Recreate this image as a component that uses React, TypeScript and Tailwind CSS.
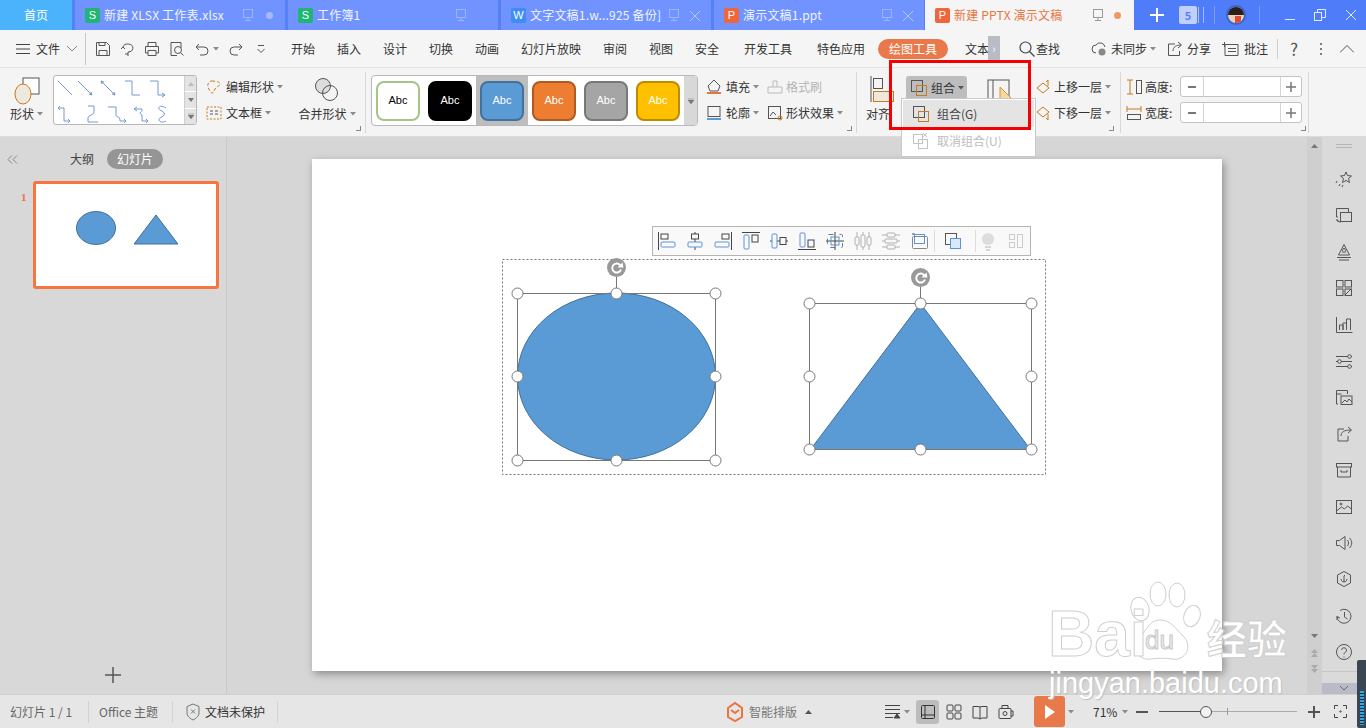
import React from "react";

const S = ({ w, h, children, className = "" }: { w: number; h: number; children: React.ReactNode; className?: string }) => (
  <svg width={w} height={h} viewBox={`0 0 ${w} ${h}`} fill="none" stroke="#555" strokeWidth="1" className={"shrink-0 " + className}>{children}</svg>
);
const Caret = ({ c = "#8a8a8a" }: { c?: string }) => (
  <svg width="6" height="4" viewBox="0 0 6 4" className="shrink-0 ml-[3px]"><path d="M0 0h6L3 3.5z" fill={c} /></svg>
);
const Monitor = ({ c }: { c: string }) => (
  <S w={14} h={14}><g stroke={c}><rect x="2.5" y="1.5" width="9" height="8" /><path d="M7 9.500v3M4 12.500h6" /></g></S>
);

function Tab({ letter, color, title, end, active }: { letter: string; color: string; title: string; end: "dot" | "x" | "none" | "odot"; active?: boolean }) {
  return (
    <div className={"w-[210px] h-full flex items-center relative shrink-0 pl-[10px] " + (active ? "bg-[#f5f5f5] text-[#e8743f]" : "bg-[#7093ff] text-[#f0f3ff]")}>
      <div className="w-[15px] h-[15px] rounded-[2px] flex items-center justify-center text-white text-[11px] font-['Liberation_Sans',sans-serif]" style={{ background: color }}>{letter}</div>
      <span className="ml-[4px] text-[12px] whitespace-nowrap tracking-[0.2px]">{title}</span>
      <div className="absolute left-[166px] top-[8px]"><Monitor c={active ? "#9a9a9a" : "#9db4ff"} /></div>
      {end === "dot" && <div className="absolute left-[191px] top-[12px] w-[7px] h-[7px] rounded-full bg-[#a5baff]" />}
      {end === "odot" && <div className="absolute left-[189px] top-[12px] w-[7px] h-[7px] rounded-full bg-[#eb9a62]" />}
      {end === "x" && <svg width="12" height="12" className="absolute left-[188px] top-[10px]" stroke="#b4c6ff"><path d="M1 1l10 10M11 1L1 11" /></svg>}
    </div>
  );
}

function TabBar() {
  return (
    <div className="h-[30px] flex bg-[#5580f7] gap-[3px]">
      <div className="w-[72px] bg-[#4ab3fb] text-white text-[12px] flex items-center justify-center shrink-0">首页</div>
      <Tab letter="S" color="#20b573" title="新建 XLSX 工作表.xlsx" end="dot" />
      <Tab letter="S" color="#20b573" title="工作簿1" end="none" />
      <Tab letter="W" color="#3f8cf5" title="文字文稿1.w...925 备份]" end="x" />
      <Tab letter="P" color="#f0663c" title="演示文稿1.ppt" end="x" />
      <div className="w-[209px] shrink-0 -ml-[2px]"><Tab letter="P" color="#f0663c" title="新建 PPTX 演示文稿" end="odot" active /></div>
      <div className="flex-1 flex items-center bg-[#4f7cf8] -ml-[3px] relative">
        <svg width="14" height="14" className="ml-[16px]" stroke="#fff" strokeWidth="2"><path d="M7 0v14M0 7h14" /></svg>
        <div className="ml-[15px] w-[18px] h-[18px] bg-[#c0d0fb] text-[#5580f7] text-[11px] font-bold flex items-center justify-center rounded-[2px]">5</div>
        <div className="w-[6px] h-[16px] ml-[1px] border-x border-[#a9bffa]" />
        <div className="w-px h-[18px] bg-[#7b9dfa] ml-[10px]" />
        <div className="ml-[11px] w-[20px] h-[20px] rounded-full bg-[#e9d3b8] border-2 border-[#3f63c9] overflow-hidden relative">
          <div className="h-[8px] bg-[#2a1f1c]" />
          <div className="absolute left-[7px] top-[9px] w-[6px] h-[7px] bg-[#e04a2e]" />
        </div>
        <div className="w-px h-[18px] bg-[#7b9dfa] ml-[13px]" />
        <div className="ml-[25px] w-[10px] h-px bg-[#dfe7ff] mt-[8px]" />
        <svg width="12" height="12" className="ml-[19px]" fill="none" stroke="#e6ecff"><rect x="0.500" y="3.500" width="7" height="8" /><path d="M3.500 3V.5h8v8H8" /></svg>
        <svg width="12" height="12" className="ml-[19px]" stroke="#e6ecff"><path d="M1 1l10 10M11 1L1 11" /></svg>
      </div>
    </div>
  );
}

const QIcons = () => (
  <div className="flex items-center text-[#555]">
    <S w={16} h={16} className="ml-[9px]"><path d="M1.500 1.500h10l3 3v10h-13zM4 1.500v3h6v-3M4 14.500v-5h8v5" /></S>
    <S w={16} h={16} className="ml-[9px]"><path d="M3 6a5 4 0 1 1 5 5v4M1 8l2-2 2 2M5 13h3" /></S>
    <S w={16} h={16} className="ml-[8px]"><path d="M4 5V1.500h8V5M1.500 12V5.500h13V12H12M4 12H1.500M4 9.500h8v5H4z" /></S>
    <S w={16} h={16} className="ml-[9px]"><path d="M12 7V1.500H2v13h6" /><circle cx="9" cy="9" r="3.500" /><path d="M11.500 11.500l3 3" /></S>
    <S w={16} h={16} className="ml-[9px]"><path d="M2 6h8a4 4 0 0 1 0 8H6M2 6l3-3M2 6l3 3" /></S>
    <Caret />
    <S w={16} h={16} className="ml-[9px]"><path d="M14 6H6a4 4 0 0 0 0 8h4M14 6l-3-3M14 6l-3 3" /></S>
    <S w={10} h={10} className="ml-[12px]"><path d="M2 1.500h6M1.500 5l3.500 3.500L8.500 5" /></S>
  </div>
);

const menu: [string, number][] = [["开始", 46], ["插入", 46], ["设计", 46], ["切换", 46], ["动画", 46], ["幻灯片放映", 82], ["审阅", 46], ["视图", 46], ["安全", 46], ["开发工具", 76], ["特色应用", 70]];

function MenuBar() {
  return (
    <div className="h-[38px] bg-[#f5f5f5] border-b border-[#e3e3e3] flex items-center text-[12px] text-[#333]">
      <svg width="14" height="12" className="ml-[16px]" stroke="#444"><path d="M0 1.500h14M0 6h14M0 10.500h14" /></svg>
      <span className="ml-[6px]">文件</span>
      <svg width="10" height="6" className="ml-[7px]" fill="none" stroke="#888"><path d="M0 0l5 5 5-5" /></svg>
      <div className="w-px h-[32px] bg-[#c8c8c8] ml-[8px]" />
      <div className="w-[194px] shrink-0"><QIcons /></div>
      {menu.map(([t, w]) => <div key={t} className="text-center shrink-0" style={{ width: w }}>{t}</div>)}
      <div className="ml-[2px] w-[70px] h-[20px] rounded-full bg-[#e9794a] text-white flex items-center justify-center shrink-0">绘图工具</div>
      <span className="ml-[17px] w-[23px] shrink-0 whitespace-nowrap">文本</span>
      <div className="w-[12px] h-[26px] bg-[#b9bcc4] flex items-center justify-center text-[#fff] text-[11px]">›</div>
      <svg width="16" height="16" className="ml-[19px]" fill="none" stroke="#444" strokeWidth="1.200"><circle cx="6.500" cy="6.500" r="5.500" /><path d="M10.500 10.500l5 5" /></svg>
      <span className="ml-[1px]">查找</span>
      <S w={18} h={16} className="ml-[31px]"><path d="M5 12a4 4 0 0 1 0-8 5 5 0 0 1 9 2" /><circle cx="11" cy="11" r="3.500" fill="#888" stroke="none" /></S>
      <span className="ml-[2px]">未同步</span><Caret />
      <S w={16} h={16} className="ml-[11px]"><path d="M8 3H1.500v11.500h11V10M6 10c0-4 3-6 8-6M11 1l3.500 3L11 7" /></S>
      <span className="ml-[4px]">分享</span>
      <S w={18} h={16} className="ml-[11px]"><path d="M3 3.500h13v11H3zM0 3.500h5M2.500 1v5M6 7.500h8M6 10.500h8" /></S>
      <span className="ml-[4px]">批注</span>
      <div className="w-px h-[20px] bg-[#cfcfcf] ml-[9px]" />
      <span className="ml-[12px] text-[17px] text-[#555] w-[12px]">?</span>
      <svg width="4" height="14" className="ml-[17px]" fill="#555"><circle cx="2" cy="2" r="1" /><circle cx="2" cy="7" r="1" /><circle cx="2" cy="12" r="1" /></svg>
      <svg width="14" height="8" className="ml-[17px]" fill="none" stroke="#555"><path d="M0 7.500L7 .5l7 7" /></svg>
    </div>
  );
}

const Corner = () => <div className="absolute right-[4px] bottom-[5px] w-[5px] h-[5px] border-r border-b border-[#888]" />;

function ShapeGallery() {
  return (
    <div className="w-[144px] h-[50px] mt-[7px] bg-white border border-[#b8b8b8] rounded-[3px] flex overflow-hidden shrink-0">
      <svg width="130" height="48" fill="none" stroke="#7697d4" strokeWidth="1" className="shrink-0">
        <path d="M4 5l14 14M24 5l14 14M38 19l-3-1M38 19l-1-3M47 5l14 14M47 5l1 3M47 5l3 1M61 19l-3-1M61 19l-1-3" />
        <path d="M71 5h7v14h8M96 5h8v14h7M111 19l-3-2M111 19l-3 2" />
        <path d="M4 32h6v13h6M16 45l-2-2M16 45l-2 2M4 32l2-2M4 32l2 2M34 30h6v6c0 3-6 3-6 6v4h10M54 31h8v8c0 3 4 0 4 6h6M72 45l-2-2M72 45l-2 2M80 33h8c1 4-5 3 0 6v6h6M80 33l3-2M80 33l3 2M94 45l-2-2M94 45l-2 2M112 32c-6-4-9 0-6 2 6 3 6 5 0 8-3 2 1 6 6 3" />
      </svg>
      <div className="flex-1 flex flex-col bg-[#e3e3e3] border-l border-[#cfcfcf] text-center">
        <div className="flex-1 border-b border-[#fff] flex items-center justify-center"><svg width="6" height="4"><path d="M3 0l3 4H0z" fill="#bbb" /></svg></div>
        <div className="flex-1 border-b border-[#fff] flex items-center justify-center"><svg width="6" height="4"><path d="M0 0h6L3 4z" fill="#777" /></svg></div>
        <div className="flex-1 flex items-center justify-center"><svg width="6" height="6"><path d="M0 2h6L3 6zM0 0h6" fill="#777" stroke="#777" strokeWidth=".5" /></svg></div>
      </div>
    </div>
  );
}

const styles = [
  { bg: "#fff", bd: "#a5c586", t: "#000" },
  { bg: "#000", bd: "#000", t: "#fff" },
  { bg: "#5b9bd5", bd: "#41719c", t: "#fff" },
  { bg: "#ed7d31", bd: "#ae5a21", t: "#fff" },
  { bg: "#a5a5a5", bd: "#787878", t: "#fff" },
  { bg: "#ffc000", bd: "#bc8c00", t: "#fff" },
];

function StyleGallery() {
  return (
    <div className="w-[327px] h-[51px] mt-[7px] ml-[5px] border border-[#b8b8b8] rounded-[4px] bg-white flex items-center overflow-hidden shrink-0">
      <div className="flex-1 flex items-center h-full">
        {styles.map((s, i) => (
          <div key={i} className={"w-[52px] h-full flex items-center justify-center " + (i === 2 ? "bg-[#bdbdbd]" : "")}>
            <div className="w-[44px] h-[40px] rounded-[8px] border-2 flex items-center justify-center text-[11px] font-['Liberation_Sans',sans-serif]" style={{ background: s.bg, borderColor: s.bd, color: s.t }}>Abc</div>
          </div>
        ))}
      </div>
      <div className="w-[13px] h-full bg-[#d8d8d8] flex items-center justify-center shrink-0"><svg width="6" height="6"><path d="M0 2h6L3 6zM0 0h6" fill="#777" stroke="#777" strokeWidth=".5" /></svg></div>
    </div>
  );
}

const Spin = () => (
  <div className="w-[122px] h-[21px] bg-white border border-[#c4c4c4] rounded-[3px] flex items-center text-[#777] shrink-0">
    <div className="w-[23px] h-full border-r border-[#d5d5d5] flex items-center justify-center"><div className="w-[8px] h-[2px] bg-[#777]" /></div>
    <div className="flex-1" />
    <div className="w-[21px] h-full border-l border-[#d5d5d5] flex items-center justify-center"><svg width="10" height="10" stroke="#777" strokeWidth="1.500"><path d="M5 0v10M0 5h10" /></svg></div>
  </div>
);

function Ribbon() {
  return (
    <div className="h-[69px] bg-[#f4f4f4] border-b border-[#dcdcdc] flex text-[12px] text-[#333] relative">
      <div className="w-[53px] shrink-0 flex flex-col items-center">
        <svg width="30" height="30" className="mt-[8px]" fill="none"><rect x="11" y="2" width="16" height="16" stroke="#555" fill="#fff" /><ellipse cx="11" cy="18" rx="8" ry="10" fill="#efe8dc" stroke="#c87a1e" /></svg>
        <div className="flex items-center -mt-[1px]">形状<Caret /></div>
      </div>
      <ShapeGallery />
      <div className="w-[96px] shrink-0 pl-[9px] flex flex-col">
        <div className="flex items-center h-[20px] mt-[9px]"><S w={16} h={16}><path d="M6 2c4 0 8 1 8 3s-3 2-5 5-1 4-3 4-5-7-4-9 2-3 4-3z" stroke="#c87a1e" strokeDasharray="3 2" /></S><span className="ml-[4px]">编辑形状</span><Caret /></div>
        <div className="flex items-center h-[20px] mt-[6px]"><S w={16} h={16}><rect x="1" y="2" width="14" height="12" stroke="#c87a1e" strokeDasharray="2 1.500" /><path d="M4 6h3M4 9h3M9 6h3M9 9h3" /></S><span className="ml-[4px]">文本框</span><Caret /></div>
      </div>
      <div className="w-[68px] shrink-0 flex flex-col items-center">
        <svg width="26" height="26" className="mt-[9px]" fill="none" stroke="#555"><circle cx="9" cy="9" r="7.500" fill="#ddd" /><circle cx="16" cy="16" r="7.500" /></svg>
        <div className="flex items-center mt-[2px]">合并形状<Caret /></div>
      </div>
      <div className="relative w-[8px] shrink-0 -ml-[4px]"><Corner /></div>
      <div className="w-px h-[61px] mt-[4px] bg-[#d8d8d8] shrink-0" />
      <StyleGallery />
      <div className="w-[158px] shrink-0 pl-[8px] flex flex-col relative">
        <div className="flex items-center h-[20px] mt-[9px]">
          <S w={16} h={16}><path d="M8 1l6 6-2 5H4L2 7z" /><path d="M1 14h14" stroke="#e8743f" strokeWidth="2" /></S><span className="ml-[4px]">填充</span><Caret />
          <S w={16} h={16} className="ml-[8px]"><g stroke="#bbb"><path d="M1 14V8h14v6zM6 8V2h4v6" /></g></S><span className="ml-[3px] text-[#b5b5b5]">格式刷</span>
        </div>
        <div className="flex items-center h-[20px] mt-[6px]">
          <S w={16} h={16}><rect x="2" y="1.500" width="12" height="10" /><path d="M1 14h14" stroke="#5b9bd5" strokeWidth="2" /></S><span className="ml-[4px]">轮廓</span><Caret />
          <S w={16} h={16} className="ml-[8px]"><rect x="1.500" y="1.500" width="12" height="12" /><path d="M3 11l3-4 3 3" /><circle cx="13" cy="13" r="2" stroke="#c87a1e" /></S><span className="ml-[3px]">形状效果</span><Caret />
        </div>
        <Corner />
      </div>
      <div className="w-px h-[61px] mt-[4px] bg-[#d8d8d8] shrink-0" />
      <div className="w-[49px] shrink-0 flex flex-col pl-[9px]">
        <svg width="24" height="26" className="mt-[8px] ml-[4px]" fill="none" stroke="#555"><path d="M1 0v26" /><rect x="3.500" y="2.500" width="9" height="10" /><rect x="3.500" y="15.500" width="20" height="10" stroke="#c87a1e" fill="#efe8dc" /></svg>
        <span className="mt-[3px] whitespace-nowrap">对齐</span>
      </div>
      <div className="w-[61px] h-[24px] mt-[8px] bg-[#bdbdbd] rounded-[3px] flex items-center pl-[4px] shrink-0">
        <S w={18} h={18}><rect x="1.500" y="1.500" width="11" height="11" /><rect x="6.500" y="6.500" width="10" height="10" stroke="#c87a1e" /></S>
        <span className="ml-[3px]">组合</span><Caret c="#555" />
      </div>
      <div className="w-[68px] shrink-0 flex justify-center pr-[2px]">
        <svg width="26" height="24" className="mt-[10px]" fill="none" stroke="#555"><rect x="1" y="2" width="21" height="19" /><path d="M6 2v19" /><path d="M13 9l11 11-4 1 2 3H13z" fill="#f3d9a5" stroke="#d8932a" /></svg>
      </div>
      <div className="w-[85px] shrink-0 flex flex-col">
        <div className="flex items-center h-[20px] mt-[9px]"><S w={16} h={16}><path d="M2 9l6-5 6 5-6 5z" stroke="#c87a1e" /><path d="M13 7V1l-2 2" stroke="#c87a1e" /></S><span className="ml-[3px]">上移一层</span><Caret /></div>
        <div className="flex items-center h-[20px] mt-[6px]"><S w={16} h={16}><path d="M2 7l6-5 6 5-6 5z" stroke="#c87a1e" /><path d="M13 9v6l-2-2" stroke="#c87a1e" /></S><span className="ml-[3px]">下移一层</span><Caret /></div>
      </div>
      <div className="w-[2px] shrink-0 relative -ml-[8px] mr-[6px]"><div className="absolute right-0 bottom-[5px] w-[5px] h-[5px] border-r border-b border-[#888]" /></div>
      <div className="w-px h-[61px] mt-[4px] bg-[#d8d8d8] shrink-0" />
      <div className="w-[189px] shrink-0 pl-[5px] relative flex flex-col">
        <div className="flex items-center h-[21px] mt-[8px]">
          <S w={16} h={16}><path d="M1 1h6M1 15h6M4 1v14" stroke="#c87a1e" /><rect x="10.500" y="1.500" width="5" height="13" /></S>
          <span className="ml-[3px] mr-[3px] w-[32px]">高度:</span><Spin />
        </div>
        <div className="flex items-center h-[21px] mt-[5px]">
          <S w={16} h={16}><path d="M1 1v6M15 1v6M1 4h14" stroke="#c87a1e" /><rect x="1.500" y="9.500" width="13" height="5" /></S>
          <span className="ml-[3px] mr-[3px] w-[32px]">宽度:</span><Spin />
        </div>
        <Corner />
      </div>
      <div className="w-px h-[61px] mt-[4px] bg-[#d8d8d8] shrink-0 -ml-[2px]" />
    </div>
  );
}

function Dropdown() {
  return (
    <div className="absolute left-[901px] top-[98px] w-[135px] h-[59px] bg-white border border-[#c9c9c9] text-[12px] z-10 p-[1px]">
      <div className="h-[27px] bg-[#e4e4e4] flex items-center pl-[9px] text-[#444]">
        <S w={18} h={18}><rect x="1.500" y="1.500" width="11" height="11" /><rect x="6.500" y="6.500" width="10" height="10" stroke="#c87a1e" /></S>
        <span className="ml-[7px]">组合(G)</span>
      </div>
      <div className="h-[28px] flex items-center pl-[9px] text-[#bdbdbd]">
        <S w={18} h={18}><g stroke="#c4c4c4"><rect x="1.500" y="2.500" width="9" height="9" /><rect x="6.500" y="7.500" width="9" height="9" /><path d="M11 1l4 4M15 1l-4 4" /></g></S>
        <span className="ml-[7px]">取消组合(U)</span>
      </div>
    </div>
  );
}

const b = "#5b93dd";
const g = "#b0b0b0";
const FT: React.ReactNode[] = [
  <><path d="M1.500 1v18" stroke="#444" /><rect x="4" y="3" width="7" height="5" stroke="#444" /><rect x="4" y="11" width="14" height="5" rx="1" stroke={b} /></>,
  <><path d="M10 1v18" stroke="#444" /><rect x="6.500" y="3" width="7" height="5" fill="#f8f8f8" stroke="#444" /><rect x="3" y="11" width="14" height="5" rx="1" fill="#f8f8f8" stroke={b} /></>,
  <><path d="M18.500 1v18" stroke="#444" /><rect x="9" y="3" width="7" height="5" stroke="#444" /><rect x="2" y="11" width="14" height="5" rx="1" stroke={b} /></>,
  <><path d="M1 1.500h18" stroke="#444" /><rect x="3" y="4" width="5" height="14" rx="1" stroke={b} /><rect x="11" y="4" width="6" height="7" stroke="#444" /></>,
  <><path d="M1 10h18" stroke="#444" /><rect x="3" y="3" width="5" height="14" rx="1" fill="#f8f8f8" stroke={b} /><rect x="11" y="6.500" width="6" height="7" fill="#f8f8f8" stroke="#444" /></>,
  <><path d="M1 18.500h18" stroke="#444" /><rect x="3" y="2" width="5" height="14" rx="1" stroke={b} /><rect x="11" y="9" width="6" height="7" stroke="#444" /></>,
  <><path d="M1 10h18M10 1v18" stroke="#444" /><rect x="2.500" y="3.500" width="15" height="13" rx="1" stroke="#777" strokeDasharray="5 6" /><rect x="6" y="6" width="8" height="8" stroke={b} /></>,
  <><path d="M4 1v18M10 1v18M16 1v18" stroke={g} /><rect x="2" y="6" width="4" height="8" rx="1" fill="#f8f8f8" stroke={g} /><rect x="8" y="4" width="4" height="12" rx="1" fill="#f8f8f8" stroke={g} /><rect x="14" y="6" width="4" height="8" rx="1" fill="#f8f8f8" stroke={g} /></>,
  <><path d="M1 4h18M1 10h18M1 16h18" stroke={g} /><rect x="6" y="2" width="8" height="4" rx="1" fill="#f8f8f8" stroke={g} /><rect x="4" y="8" width="12" height="4" rx="1" fill="#f8f8f8" stroke={g} /><rect x="6" y="14" width="8" height="4" rx="1" fill="#f8f8f8" stroke={g} /></>,
  <><path d="M3 3h3" stroke="#444" /><rect x="3.500" y="5.500" width="15" height="12" rx="1" stroke="#888" /><rect x="5.500" y="3.500" width="10" height="9" stroke={b} /></>,
];

function FloatBar() {
  return (
    <div className="absolute left-[340px] top-[67px] h-[30px] w-[379px] bg-[#f9f9f9] border border-[#b5b5b5] flex items-center pl-[4px] z-[5]">
      {FT.map((n, i) => (
        <svg key={i} width="20" height="20" fill="none" className="shrink-0 mr-[8px]">{n}</svg>
      ))}
      <div className="w-px h-[22px] bg-[#ddd] -ml-[3px] mr-[8px]" />
      <svg width="20" height="20" fill="none" className="shrink-0 mr-[12px]"><rect x="2.500" y="2.500" width="11" height="11" stroke="#555" /><rect x="7.500" y="7.500" width="10" height="10" fill="#dbe8fb" stroke={b} /></svg>
      <div className="w-px h-[22px] bg-[#ddd] mr-[2px]" />
      <svg width="20" height="20" fill="none" className="shrink-0 mr-[8px]"><circle cx="10" cy="8" r="6" fill="#ddd" /><path d="M7 16h6M8 19h4" stroke="#ccc" strokeWidth="1.500" /></svg>
      <svg width="20" height="20" fill="none" stroke="#ccc" className="shrink-0"><rect x="3.500" y="3.500" width="5" height="5" /><rect x="3.500" y="11.500" width="5" height="5" /><rect x="11.500" y="3.500" width="5" height="13" /></svg>
    </div>
  );
}

const Handle = ({ x, y }: { x: number; y: number }) => <circle cx={x} cy={y} r="5.500" fill="#fff" stroke="#777" />;
const Rot = ({ x, y }: { x: number; y: number }) => (
  <g>
    <circle cx={x} cy={y} r="9.500" fill="#999" />
    <path d={`M${x + 4} ${y - 2}a4.500 4.500 0 1 0 0.500 4`} fill="none" stroke="#fff" strokeWidth="2" />
    <path d={`M${x + 1} ${y}h6l-1-5z`} fill="#fff" />
  </g>
);

function Drawing() {
  return (
    <svg width="910" height="512" className="absolute left-0 top-0" fill="none">
      <rect x="190.500" y="100.500" width="543" height="215" stroke="#777" strokeDasharray="2 2" />
      <ellipse cx="304.500" cy="217.500" rx="99" ry="83.500" fill="#5b9bd5" stroke="#41719c" />
      <path d="M608.500 144.500L718.500 290.500H498.500z" fill="#5b9bd5" stroke="#41719c" />
      <path d="M205.500 134.500h198v167h-198zM304.500 118v16" stroke="#777" />
      <path d="M497.500 144.500h222v146h-222zM608.500 128v16" stroke="#777" />
      {[[205.500, 134.500], [304.500, 134.500], [403.500, 134.500], [205.500, 217.500], [403.500, 217.500], [205.500, 301.500], [304.500, 301.500], [403.500, 301.500],
        [497.500, 144.500], [608.500, 144.500], [719.500, 144.500], [497.500, 217.500], [719.500, 217.500], [497.500, 290.500], [608.500, 290.500], [719.500, 290.500]].map(([x, y], i) => <Handle key={i} x={x} y={y} />)}
      <Rot x={304.500} y={108.500} />
      <Rot x={608.500} y={118.500} />
    </svg>
  );
}

function LeftPanel() {
  return (
    <div className="w-[227px] shrink-0 bg-[#d8d8d8] border-r border-[#cacaca] relative flex flex-col text-[12px]">
      <div className="h-[44px] flex items-center shrink-0">
        <svg width="11" height="9" className="ml-[7px]" fill="none" stroke="#888"><path d="M5 .5L1 4.500 5 8.500M10 .5L6 4.500 10 8.500" /></svg>
        <span className="ml-[52px] text-[#444]">大纲</span>
        <div className="ml-[13px] w-[56px] h-[20px] rounded-full bg-[#959595] text-white flex items-center justify-center">幻灯片</div>
      </div>
      <div className="flex pl-[21px]">
        <span className="w-[12px] text-[#f0703c] font-bold text-[11px] mt-[8px] font-['Liberation_Serif',serif]">1</span>
        <div className="w-[186px] h-[108px] bg-white border-[3px] border-[#f5763f] rounded-[3px] relative">
          <svg width="180" height="102" fill="none"><ellipse cx="60" cy="44" rx="19.500" ry="16.500" fill="#5b9bd5" stroke="#41719c" /><path d="M120 31l22 29H98z" fill="#5b9bd5" stroke="#41719c" /></svg>
        </div>
      </div>
      <div className="flex-1 flex items-end justify-center pb-[11px]">
        <svg width="16" height="16" stroke="#555" strokeWidth="1.500"><path d="M8 0v16M0 8h16" /></svg>
      </div>
    </div>
  );
}

function Canvas() {
  return (
    <div className="flex-1 min-w-0 bg-[#d6d6d6] pt-[22px] pl-[85px] relative overflow-hidden">
      <div className="w-[910px] h-[512px] bg-white shadow-[2px_3px_8px_rgba(0,0,0,0.35)] relative">
        <FloatBar />
        <Drawing />
      </div>
    </div>
  );
}

const sideIcons: React.ReactNode[] = [
  <path d="M11 2l1.500 3.500 4 .5-3 2.500 1 4-3.500-2-3.500 2 1-4-3-2.500 4-.5zM2 11l-1 2M5 14l-1 2M8 15l-1 2" />,
  <><path d="M3 11H1.500V2.500h12V6" /><rect x="5.500" y="6.500" width="11" height="9" /><path d="M2 14c1 2 3 2 4 2M2 13l0 2 2 0" /></>,
  <><path d="M9 1.500L14.500 12h-11zM7 8l2-3 2 3M7 9h4M2 14.500h14M4 17h10" /></>,
  <><rect x="1.500" y="1.500" width="6.500" height="6.500" /><rect x="10" y="1.500" width="6.500" height="6.500" /><rect x="1.500" y="10" width="6.500" height="6.500" /><rect x="10" y="10" width="6.500" height="6.500" /><path d="M10 16l6-6" /></>,
  <><path d="M1.500 1v15.500h16M4.500 14V9h3.500v5M8 14V7h3.500v7M11.500 14V3h4v11" /></>,
  <><path d="M1 4.500h12M16 4.500h1M1 9.500h2M6 9.500h11M1 14.500h12M16 14.500h1" /><circle cx="14.500" cy="4.500" r="1.800" /><circle cx="4.500" cy="9.500" r="1.800" /><circle cx="14.500" cy="14.500" r="1.800" /></>,
  <><path d="M3 16H1.500V2.500h11V6M1.500 6h5" /><rect x="6" y="8" width="11" height="8.500" /><path d="M7 15l3-3 2 2 2-3 3 3" /></>,
  <><path d="M9 4H3v12h10v-5M6 11c0-4 3-6 10-6M13 2l3.500 3L13 8" /></>,
  <><rect x="1.500" y="2.500" width="15" height="3.500" /><path d="M2.500 6v10h13V6M6 9v2h6V9" /></>,
  <><rect x="1.500" y="2.500" width="15" height="13" /><path d="M1.500 13l5-4 3 2 3-3 4 3" /><circle cx="6" cy="6" r="1" /></>,
  <><path d="M1.500 6.500h3L10 2.500v13l-5.500-4h-3zM12.500 6c1.500 2 1.500 4 0 6M14.500 4c3 3 3 7 0 10" /></>,
  <><path d="M9 1.500l6.500 3.500v8L9 16.500 2.500 13V5zM6 9c0 2 2 3 3 3s3-1 3-3M9 12V6l1-1" /></>,
  <><path d="M5 3.500a7 7 0 1 1-3 6M2 13l0-3.500 3 1.500M9.500 5v5l3 2" /></>,
  <><circle cx="9" cy="9" r="7.500" /><path d="M6.500 7a2.500 2.500 0 1 1 3.500 2.500C9 10 9 11 9 11.500M9 13.500v1" /></>,
];

const Side = () => (
  <div className="w-[59px] shrink-0 flex h-full">
    <div className="w-[15px] bg-[#cfcfcf] flex flex-col items-center py-[7px] relative">
      <svg width="7" height="4"><path d="M3.500 0L7 4H0z" fill="#777" /></svg>
      <div className="flex-1" />
      <svg width="7" height="4" className="mb-[11px]"><path d="M0 0h7L3.500 4z" fill="#777" /></svg>
      <svg width="7" height="8" className="mb-[8px]"><path d="M3.500 0L7 4H0zM3.500 4L7 8H0z" fill="#aaa" /></svg>
      <svg width="7" height="8" className="mb-[6px]"><path d="M0 0h7L3.500 4zM0 4h7L3.500 8z" fill="#aaa" /></svg>
      <div className="h-[8px]" />
    </div>
    <div className="w-[44px] bg-[#dadada] flex flex-col items-center relative">
      <div className="w-[16px] h-[4px] border-y border-[#b5b5b5] mt-[7px] mb-[22px] shrink-0" />
      <div className="flex flex-col items-center gap-[18.4px]">
        {sideIcons.map((n, i) => <svg key={i} width="18" height="18" fill="none" stroke="#555" strokeWidth="1" className="shrink-0">{n}</svg>)}
      </div>
      <div className="flex-1" />
      <div className="w-full h-[12px] border-t border-[#c6c6c6] shrink-0" />
      <div className="w-full h-[11px] bg-[#b9bcc6] flex items-center justify-center shrink-0"><svg width="8" height="5" fill="none" stroke="#666"><path d="M0 0l4 4 4-4" /></svg></div>
    </div>
  </div>
);

function StatusBar() {
  return (
    <div className="h-[34px] bg-[#e6e6e6] border-t border-[#d0d0d0] flex items-center text-[12px] text-[#666] relative">
      <span className="ml-[10px] w-[78px] whitespace-nowrap">幻灯片 1 / 1</span>
      <div className="w-px h-[22px] bg-[#d2d2d2]" />
      <span className="ml-[10px] w-[73px] whitespace-nowrap">Office 主题</span>
      <div className="w-px h-[22px] bg-[#d2d2d2]" />
      <S w={16} h={18} className="ml-[12px]"><g stroke="#777"><path d="M8 1l6 2.500V10c0 3-3 5.500-6 7-3-1.500-6-4-6-7V3.500z" /><path d="M6 6.500l4 4M10 6.500l-4 4" /></g></S>
      <span className="ml-[4px] text-[#333] w-[72px]">文档未保护</span>
      <div className="w-px h-[22px] bg-[#d2d2d2]" />
      <S w={20} h={22} className="ml-[447px]"><g stroke="#e8743f" strokeWidth="2"><path d="M3 7l7-5 7 5v9l-7 4-7-4z" /><path d="M6 9l4 3 4-3" /></g></S>
      <span className="ml-[4px] text-[#777] w-[52px]">智能排版</span>
      <svg width="7" height="4" className="ml-[4px]"><path d="M3.500 0L7 4H0z" fill="#555" /></svg>
      <svg width="16" height="16" className="ml-[73px] shrink-0" stroke="#444"><path d="M0 1.500h15M0 5.500h15M0 9.500h15M0 13.500h8" /><path d="M12 10l3 4H9z" fill="#444" /></svg>
      <Caret />
      <div className="ml-[6px] w-[23px] h-[24px] rounded-[3px] bg-[#bdbdbd] flex items-center justify-center shrink-0">
        <svg width="16" height="16" fill="none" stroke="#333"><rect x="1.500" y="1.500" width="13" height="13" rx="1" /><path d="M5 1.500v13M1.500 11h13" /></svg>
      </div>
      <svg width="16" height="16" className="ml-[7px] shrink-0" fill="none" stroke="#444"><rect x="1" y="1" width="6" height="6" rx="1" /><rect x="9" y="1" width="6" height="6" rx="1" /><rect x="1" y="9" width="6" height="6" rx="1" /><rect x="9" y="9" width="6" height="6" rx="1" /></svg>
      <svg width="16" height="16" className="ml-[10px] shrink-0" fill="none" stroke="#444"><path d="M8 3v12M1 2.500h5L8 3l2-.5h5V14H10l-2 1-2-1H1z" /></svg>
      <svg width="16" height="16" className="ml-[10px] shrink-0" fill="none" stroke="#444"><rect x="1" y="4.500" width="12" height="10" rx="1" /><path d="M4 4V1.500h6V4M13 7l2 0v5h-2" /><circle cx="7" cy="9.500" r="2" /></svg>
      <div className="ml-[20px] w-[31px] h-[31px] rounded-[3px] bg-[#e8794a] flex items-center justify-center shrink-0">
        <svg width="10" height="14"><path d="M0 0l10 7-10 7z" fill="#fff" /></svg>
      </div>
      <Caret />
      <span className="ml-[19px] text-[#333] w-[26px]">71%</span><Caret />
      <div className="ml-[8px] w-[12px] h-[2px] bg-[#555] shrink-0" />
      <div className="ml-[11px] w-[138px] h-[12px] relative flex items-center shrink-0">
        <div className="w-full h-px bg-[#aaa]" />
        <div className="absolute left-0 w-[42px] h-px bg-[#555]" />
        <div className="absolute left-[68px] h-[7px] w-px bg-[#999]" />
        <div className="absolute left-[41px] top-0 w-[12px] h-[12px] rounded-full bg-[#f2f2f2] border border-[#555]" />
      </div>
      <svg width="12" height="12" className="ml-[11px] shrink-0" stroke="#555" strokeWidth="2"><path d="M6 0v12M0 6h12" /></svg>
      <svg width="13" height="13" className="ml-[14px] shrink-0" fill="none" stroke="#444"><path d="M.5 4V.5H4M9 .5h3.500V4M12.500 9v3.500H9M4 12.500H.5V9" /><circle cx="6.500" cy="6.500" r=".7" /></svg>
    </div>
  );
}

function Watermark() {
  const stroke = "[-webkit-text-stroke:1px_#cfcfcf]";
  return (
    <div className="absolute left-[1040px] top-[580px] w-[260px] h-[120px] z-20 pointer-events-none text-white font-['Liberation_Sans',sans-serif]">
      <svg width="260" height="90" className="absolute left-0 top-0" fill="#fff" fillOpacity="0.75" stroke="#cfcfcf">
        <ellipse cx="100" cy="29" rx="9" ry="12" transform="rotate(-15 100 29)" />
        <ellipse cx="118" cy="14" rx="8" ry="12" />
        <ellipse cx="137" cy="15" rx="8" ry="12" />
        <ellipse cx="152" cy="36" rx="8" ry="11" transform="rotate(20 152 36)" />
        <path d="M120 40c11 0 16 9 24 17 9 10 1 24-11 22-7-1-15-1-22 0-13 2-20-11-11-22 7-7 9-17 20-17z" />
      </svg>
      <span className={"absolute left-[8px] top-[19px] text-[64px] leading-[70px] font-bold " + stroke}>Bai</span>
      <span className="absolute left-[105px] top-[45px] text-[26px] leading-[30px] text-[#eeeeee] [-webkit-text-stroke:1px_#c8c8c8]">du</span>
      <span className={"absolute left-[167px] top-[32px] text-[40px] leading-[50px] font-bold font-['Noto_Sans_CJK_SC',sans-serif] " + stroke}>经验</span>
      <span className="absolute left-[9px] top-[85px] text-[29px] leading-[36px] text-white [text-shadow:1px_1px_1px_#bdbdbd]">jingyan.baidu.com</span>
    </div>
  );
}

export default function App() {
  return (
    <div className="w-[1366px] h-[728px] overflow-hidden relative flex flex-col bg-[#d6d6d6] font-['Noto_Sans_CJK_SC','Noto_Sans',sans-serif]">
      <TabBar />
      <MenuBar />
      <Ribbon />
      <div className="flex-1 flex min-h-0">
        <LeftPanel />
        <Canvas />
        <Side />
      </div>
      <StatusBar />
      <Dropdown />
      <div className="absolute left-[889px] top-[60px] w-[142px] h-[70px] border-[3px] border-[#f40000] z-30 pointer-events-none" />
      <Watermark />
      <div className="absolute left-[1357px] top-[660px] w-[9px] h-[68px] bg-[#3a4652] rounded-l-[2px] z-30 flex flex-col justify-end items-center pb-[3px]">
        <div className="w-[4px] h-[34px] bg-[repeating-linear-gradient(#2ea7e6_0_2px,#1b2a36_2px_3px)]" />
      </div>
    </div>
  );
}
